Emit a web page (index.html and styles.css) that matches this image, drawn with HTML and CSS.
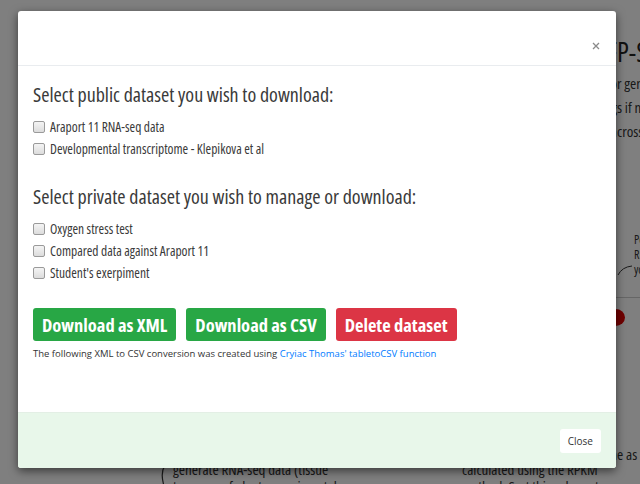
FILE: index.html
```html
<!DOCTYPE html>
<html>
<head>
<meta charset="utf-8">
<link rel="stylesheet" href="styles.css">
</head>
<body>
<div class="page">
  <h1 class="bg-title"><span class="pre">eF</span>P-Seq Browser</h1>
  <p class="bg-line l1"><span class="pre">Transcriptome viewer fo</span>r generating</p>
  <p class="bg-line l2"><span class="pre">Click on the column heading</span>s if needed</p>
  <p class="bg-line l3"><span class="pre">expression levels a</span>cross tissues</p>
  <div class="bg-note">Per<br>RPKM<br>your</div>
  <svg class="bg-curve" width="16" height="12" viewBox="0 0 16 12"><path d="M1 11 Q5 3 15 2" fill="none" stroke="#333" stroke-width="1"/></svg>
  <div class="bg-rule"></div>
  <div class="bg-dot"></div>
  <p class="bg-small edge"><span class="pre">the sam</span>e as</p>
  <svg class="bg-curve2" width="20" height="30" viewBox="0 0 20 30"><path d="M18 2 Q4 8 10 28" fill="none" stroke="#333" stroke-width="1.2"/></svg>
  <p class="bg-small left">generate RNA-seq data (tissue<br>type, age of plant, experimental</p>
  <p class="bg-small right">calculated using the RPKM<br>method. Sort this column to</p>
</div>
<div class="overlay">
  <div class="modal">
    <div class="modal-header">
      <button class="close-x" type="button" aria-label="Close">
        <svg width="8" height="8" viewBox="0 0 8 8"><path d="M1 1 L7 7 M7 1 L1 7" stroke="#8a8a8a" stroke-width="1.3"/></svg>
      </button>
    </div>
    <div class="modal-body">
      <h4 class="section-title">Select public dataset you wish to download:</h4>
      <label class="check"><input type="checkbox"> Araport 11 RNA-seq data</label>
      <label class="check"><input type="checkbox"> Developmental transcriptome - Klepikova et al</label>
      <h4 class="section-title second">Select private dataset you wish to manage or download:</h4>
      <label class="check"><input type="checkbox"> Oxygen stress test</label>
      <label class="check"><input type="checkbox"> Compared data against Araport 11</label>
      <label class="check"><input type="checkbox"> Student's exerpiment</label>
      <div class="actions">
        <button class="btn btn-green" type="button">Download as XML</button>
        <button class="btn btn-green" type="button">Download as CSV</button>
        <button class="btn btn-red" type="button">Delete dataset</button>
      </div>
      <p class="credit">The following XML to CSV conversion was created using <a href="#">Cryiac Thomas' tabletoCSV function</a></p>
    </div>
    <div class="modal-footer">
      <button class="btn-close" type="button">Close</button>
    </div>
  </div>
</div>
</body>
</html>
```
FILE: styles.css
```css
html, body {
  margin: 0;
  padding: 0;
  width: 640px;
  height: 484px;
  overflow: hidden;
  font-family: "Open Sans", "Noto Sans", sans-serif;
  font-stretch: 78%;
}
.page {
  position: relative;
  width: 640px;
  height: 484px;
  background: #fff;
  color: #222;
  overflow: hidden;
}
.pre {
  position: absolute;
  right: 100%;
  white-space: nowrap;
}
.bg-title {
  position: absolute;
  left: 617px;
  top: 34px;
  margin: 0;
  font-size: 27px;
  font-weight: 500;
  line-height: 36px;
  white-space: nowrap;
}
.bg-line {
  position: absolute;
  left: 617px;
  margin: 0;
  font-size: 15px;
  line-height: 20px;
  white-space: nowrap;
  color: #333;
}
.l1 { top: 73px; }
.l2 { top: 97px; }
.l3 { top: 121px; }
.bg-note {
  position: absolute;
  left: 634px;
  top: 232px;
  font-size: 12px;
  line-height: 15px;
  color: #333;
}
.bg-curve { position: absolute; left: 617px; top: 264px; }
.bg-rule {
  position: absolute;
  left: 400px;
  top: 297px;
  width: 240px;
  height: 1px;
  background: #ccc;
}
.bg-dot {
  position: absolute;
  left: 606px;
  top: 309px;
  width: 19px;
  height: 17px;
  border-radius: 50%;
  background: #e00000;
}
.bg-small {
  position: absolute;
  margin: 0;
  font-size: 15px;
  line-height: 17px;
  white-space: nowrap;
  color: #333;
}
.bg-small.left { left: 173px; top: 461px; }
.bg-small.right { left: 462px; top: 461px; }
.bg-small.edge { left: 617px; top: 446px; }
.bg-curve2 { position: absolute; left: 154px; top: 458px; }

.overlay {
  position: absolute;
  left: 0;
  top: 0;
  width: 640px;
  height: 484px;
  background: rgba(0, 0, 0, 0.5);
}
.modal {
  margin: 11px 0 0 18px;
  width: 598px;
  background: #fff;
  border-radius: 3px;
  box-shadow: 0 3px 10px rgba(0, 0, 0, 0.55);
  overflow: hidden;
  color: #212529;
}
.modal-header {
  height: 55px;
  border-bottom: 1px solid #e9ecef;
  display: flex;
  justify-content: flex-end;
  align-items: flex-start;
  box-sizing: border-box;
}
.close-x {
  border: 0;
  background: none;
  padding: 0;
  margin: 31px 16px 0 0;
  width: 8px;
  height: 8px;
  line-height: 0;
}
.modal-body {
  padding: 16px 15px 0 15px;
  height: 346px;
  box-sizing: border-box;
}
.section-title {
  margin: 0 0 8px 0;
  font-size: 20px;
  font-weight: 400;
  line-height: 26px;
  color: #3a3a3a;
}
.section-title.second { margin-top: 24px; }
.check {
  display: flex;
  align-items: center;
  font-size: 13.5px;
  line-height: 22px;
  height: 22px;
  color: #3a3a3a;
}
.check input {
  appearance: none;
  -webkit-appearance: none;
  box-sizing: border-box;
  margin: 0 5px 0 0;
  width: 12px;
  height: 12px;
  border: 1px solid #9a9a9a;
  border-radius: 2px;
  background: linear-gradient(#f4f4f4, #dcdcdc);
}
.actions {
  display: flex;
  gap: 10px;
  margin-top: 24px;
}
.btn {
  border: 0;
  border-radius: 3px;
  color: #fff;
  font-family: inherit;
  font-stretch: 78%;
  font-weight: 700;
  font-size: 18.5px;
  height: 33px;
  padding: 0 9px;
}
.btn-green { background: #28a745; }
.btn-red { background: #dc3545; }
.credit {
  margin: 5px 0 0 0;
  font-size: 9.5px;
  font-stretch: 100%;
  line-height: 15px;
  color: #333;
}
.credit a {
  color: #007bff;
  text-decoration: none;
}
.modal-footer {
  height: 56px;
  background: #e8f7ea;
  border-top: 1px solid #e3efe5;
  display: flex;
  justify-content: flex-end;
  align-items: center;
  padding-right: 15px;
  box-sizing: border-box;
}
.btn-close {
  border: 0;
  background: #fff;
  border-radius: 3px;
  font-family: inherit;
  font-stretch: 100%;
  font-size: 10px;
  height: 24px;
  padding: 0 8px;
  color: #333;
}
```
